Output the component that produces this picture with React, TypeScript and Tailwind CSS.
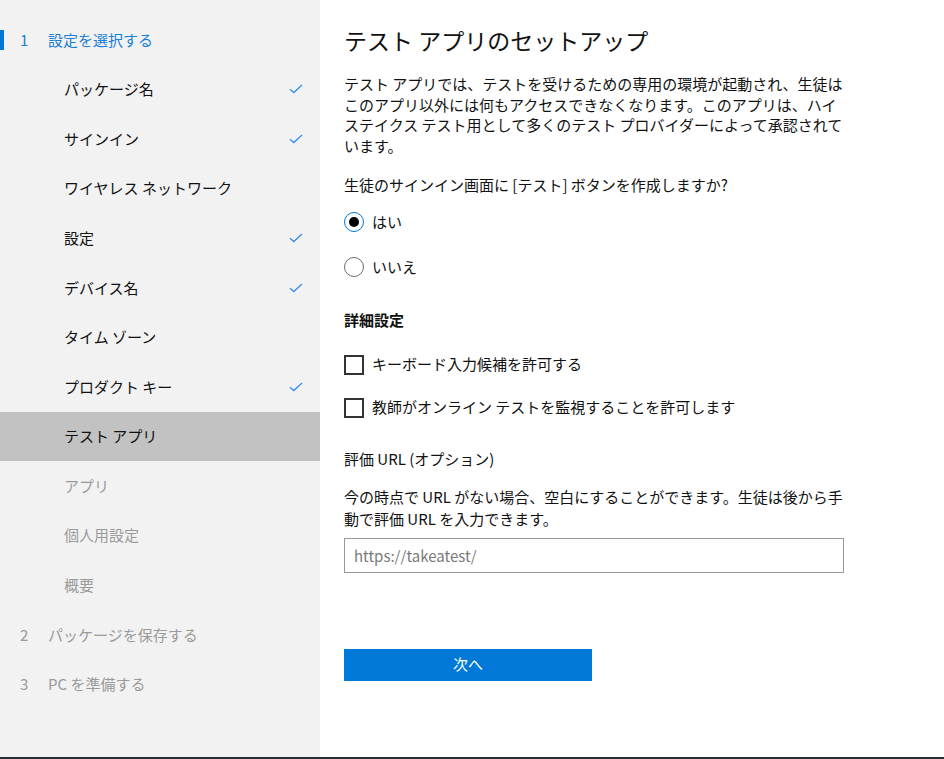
import React from "react";

const font = { fontFamily: '"Noto Sans CJK JP", "Noto Sans", sans-serif' };

function Check() {
  return (
    <svg width="14" height="10" viewBox="0 0 14 10" className="absolute right-[17px] top-1/2 -translate-y-1/2">
      <path d="M1 5.2 L4.8 8.6 L13 1" fill="none" stroke="#3a8ee6" strokeWidth="1.3" />
    </svg>
  );
}

type Item = { label: string; kind: "step" | "sub"; num?: string; state: "active" | "done" | "plain" | "selected" | "disabled" };

const items: Item[] = [
  { label: "設定を選択する", kind: "step", num: "1", state: "active" },
  { label: "パッケージ名", kind: "sub", state: "done" },
  { label: "サインイン", kind: "sub", state: "done" },
  { label: "ワイヤレス ネットワーク", kind: "sub", state: "plain" },
  { label: "設定", kind: "sub", state: "done" },
  { label: "デバイス名", kind: "sub", state: "done" },
  { label: "タイム ゾーン", kind: "sub", state: "plain" },
  { label: "プロダクト キー", kind: "sub", state: "done" },
  { label: "テスト アプリ", kind: "sub", state: "selected" },
  { label: "アプリ", kind: "sub", state: "disabled" },
  { label: "個人用設定", kind: "sub", state: "disabled" },
  { label: "概要", kind: "sub", state: "disabled" },
  { label: "パッケージを保存する", kind: "step", num: "2", state: "disabled" },
  { label: "PC を準備する", kind: "step", num: "3", state: "disabled" },
];

function SideRow({ it }: { it: Item }) {
  const color =
    it.state === "active" ? "text-[#1a7fd6]" : it.state === "disabled" ? "text-[#9a9a9a]" : "text-[#111111]";
  return (
    <div className={`relative flex items-center h-[49.6px] text-[15px] ${color} ${it.state === "selected" ? "bg-[#c2c2c2]" : ""}`}>
      {it.state === "active" && <div className="absolute left-0 top-1/2 -translate-y-1/2 w-[4px] h-[20px] bg-[#0078d7]" />}
      {it.kind === "step" ? (
        <>
          <span className="w-[48px] pl-[20px]">{it.num}</span>
          <span>{it.label}</span>
        </>
      ) : (
        <span className="pl-[64px]">{it.label}</span>
      )}
      {it.state === "done" && <Check />}
    </div>
  );
}

export default function App() {
  return (
    <div className="w-[944px] h-[759px] flex flex-col overflow-hidden" style={font}>
      <div className="flex flex-1 min-h-0">
        <div className="w-[320px] bg-[#f2f2f2] pt-[15px]">
          {items.map((it, i) => (
            <SideRow key={i} it={it} />
          ))}
        </div>
        <div className="flex-1 bg-white pl-[24px] pt-[25px] text-[#111111]">
          <div className="w-[500px] flex flex-col">
            <h1 className="h-[30px] leading-[30px] text-[23px] font-normal">テスト アプリのセットアップ</h1>
            <p className="mt-[19px] text-[15px] leading-[20.5px]">
              テスト アプリでは、テストを受けるための専用の環境が起動され、生徒はこのアプリ以外には何もアクセスできなくなります。このアプリは、ハイステイクス テスト用として多くのテスト プロバイダーによって承認されています。
            </p>
            <div className="mt-[18px] h-[21px] leading-[21px] text-[15px]">生徒のサインイン画面に [テスト] ボタンを作成しますか?</div>
            <div className="mt-[15px] h-[24px] flex items-center gap-[8px] text-[15px]">
              <span className="w-[20px] h-[20px] rounded-full border-[1.5px] border-[#0078d7] flex items-center justify-center">
                <span className="w-[10px] h-[10px] rounded-full bg-black" />
              </span>
              <span>はい</span>
            </div>
            <div className="mt-[21px] h-[24px] flex items-center gap-[8px] text-[15px]">
              <span className="w-[20px] h-[20px] rounded-full border border-[#6b6b6b]" />
              <span>いいえ</span>
            </div>
            <div className="mt-[29.5px] h-[21px] leading-[21px] text-[15px] font-bold">詳細設定</div>
            <div className="mt-[23px] h-[24px] flex items-center gap-[8px] text-[15px]">
              <span className="w-[20px] h-[20px] border-2 border-[#333333]" />
              <span>キーボード入力候補を許可する</span>
            </div>
            <div className="mt-[19px] h-[24px] flex items-center gap-[8px] text-[15px]">
              <span className="w-[20px] h-[20px] border-2 border-[#333333]" />
              <span>教師がオンライン テストを監視することを許可します</span>
            </div>
            <div className="mt-[28.5px] h-[21px] leading-[21px] text-[15px]">評価 URL (オプション)</div>
            <p className="mt-[17px] text-[15px] leading-[22px]">
              今の時点で URL がない場合、空白にすることができます。生徒は後から手動で評価 URL を入力できます。
            </p>
            <input
              className="mt-[8px] h-[35px] w-[500px] border border-[#999999] px-[9px] text-[15px] outline-none placeholder:text-[#7a7a7a]"
              placeholder="https://takeatest/"
              style={font}
            />
            <button
              className="mt-[75.5px] h-[32px] w-[248px] bg-[#0078d7] text-white text-[15px]"
              style={font}
            >
              次へ
            </button>
          </div>
        </div>
      </div>
      <div className="h-[2px] bg-[#272d35]" />
    </div>
  );
}
